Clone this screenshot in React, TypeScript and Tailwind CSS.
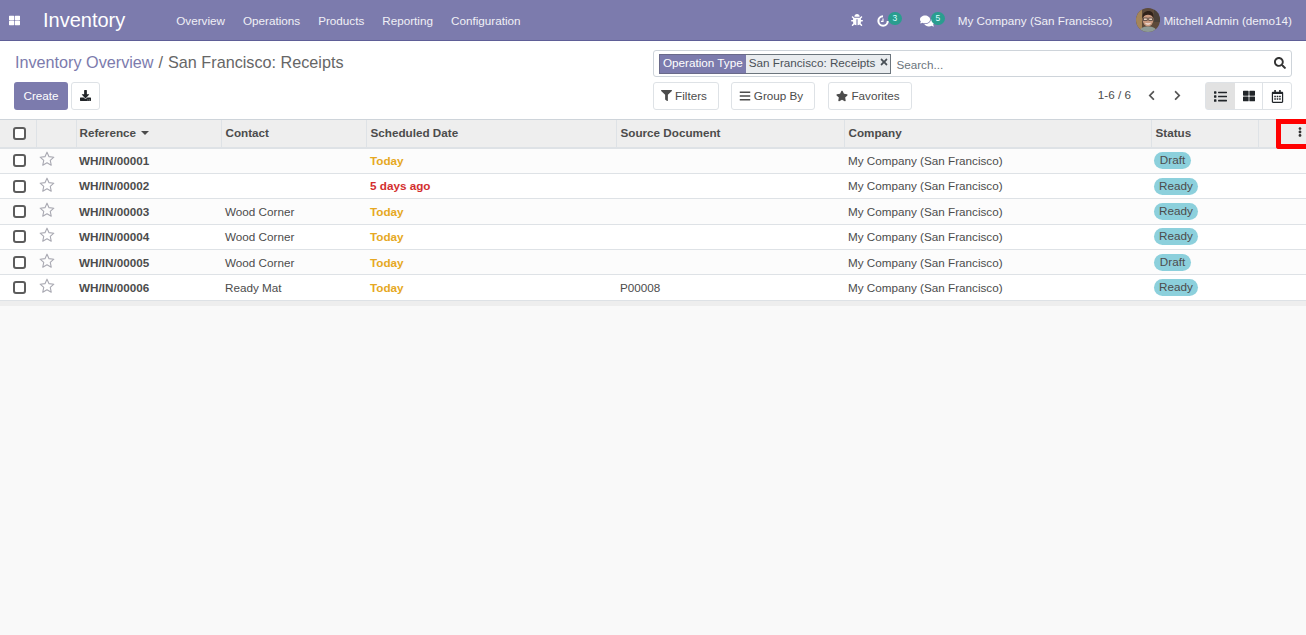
import {
  FaBars,
  FaBug,
  FaChevronLeft,
  FaChevronRight,
  FaComments,
  FaDownload,
  FaEllipsisV,
  FaFilter,
  FaList,
  FaRegCalendarAlt,
  FaSearch,
  FaStar,
  FaThLarge,
  FaTimes,
} from 'react-icons/fa'

const MENU = ['Overview', 'Operations', 'Products', 'Reporting', 'Configuration']

type Row = {
  ref: string
  contact: string
  date: string
  late?: boolean
  source: string
  status: 'Draft' | 'Ready'
}

const ROWS: Row[] = [
  { ref: 'WH/IN/00001', contact: '', date: 'Today', source: '', status: 'Draft' },
  { ref: 'WH/IN/00002', contact: '', date: '5 days ago', late: true, source: '', status: 'Ready' },
  { ref: 'WH/IN/00003', contact: 'Wood Corner', date: 'Today', source: '', status: 'Ready' },
  { ref: 'WH/IN/00004', contact: 'Wood Corner', date: 'Today', source: '', status: 'Ready' },
  { ref: 'WH/IN/00005', contact: 'Wood Corner', date: 'Today', source: '', status: 'Draft' },
  { ref: 'WH/IN/00006', contact: 'Ready Mat', date: 'Today', source: 'P00008', status: 'Ready' },
]

function Check() {
  return <span className="block w-[13px] h-[13px] rounded-[3px] border-2 border-[#5c5c5c] bg-white ml-[13px]" />
}

function Star() {
  return (
    <svg width="16" height="15" viewBox="0 0 24 23" className="block ml-[3px] -mt-[4px]">
      <path
        d="M12 1.8l3.1 6.9 7.4.8-5.5 5 1.5 7.3-6.5-3.7-6.5 3.7 1.5-7.3-5.5-5 7.4-.8z"
        fill="none"
        stroke="#a9a9b2"
        strokeWidth="1.7"
        strokeLinejoin="round"
      />
    </svg>
  )
}

function ClockIcon() {
  return (
    <svg width="12" height="12" viewBox="0 0 14 14" className="block mt-[1px]">
      <path d="M12.6 7A5.5 5.5 0 1 1 7 1.500" fill="none" stroke="#fff" strokeWidth="2.400" />
      <path d="M7 4.200v3.200H4.600" fill="none" stroke="#fff" strokeWidth="1.300" />
    </svg>
  )
}

function Avatar() {
  return (
    <svg width="24" height="24" viewBox="0 0 24 24" className="rounded-full shrink-0">
      <rect width="24" height="24" fill="#5d4a3a" />
      <rect x="0" y="0" width="6" height="24" fill="#a58559" />
      <rect x="18" y="0" width="6" height="14" fill="#4a4038" />
      <path d="M3 24c1-4 4-5.500 9-5.500s8 1.500 9 5.500z" fill="#8f9c96" />
      <ellipse cx="12" cy="12" rx="5.300" ry="6.500" fill="#c99a80" />
      <path d="M6.500 10c-.5-5 2.500-7 6-7s5.500 2.500 5 7c-1-2.500-3-3.200-5.500-3.200S8 7.500 6.500 10z" fill="#2f2119" />
      <rect x="7.600" y="10" width="3.600" height="2.400" fill="#e5cdb9" stroke="#3b3330" strokeWidth=".7" />
      <rect x="12.800" y="10" width="3.600" height="2.400" fill="#e5cdb9" stroke="#3b3330" strokeWidth=".7" />
      <path d="M9.500 15.300c1.500 1 3.500 1 5 0" fill="none" stroke="#fff" strokeWidth="1" />
    </svg>
  )
}

function Badge({ n }: { n: number }) {
  return (
    <span className="absolute -top-[2px] left-[11px] w-[14px] h-[13px] rounded-full bg-[#2a9d8f] text-[#dff] text-[8.5px] leading-[12px] text-center">
      {n}
    </span>
  )
}

function Navbar() {
  return (
    <header className="h-[41px] shrink-0 flex items-center bg-[#7c7bad] border-b border-[#5f5e97] text-white text-[11.7px]">
      <FaThLarge className="ml-[9px] text-[11px]" />
      <span className="ml-[23px] text-[20px] leading-none">Inventory</span>
      <nav className="flex ml-[51px] gap-[18px] text-[#f0f0f6] pt-[1px]">
        {MENU.map((m) => (
          <span key={m}>{m}</span>
        ))}
      </nav>
      <div className="ml-auto flex items-center text-[#f0f0f6]">
        <FaBug className="text-[12px] text-white mr-[14px]" />
        <span className="relative w-[24px] h-[13px] mr-[19px] block">
          <ClockIcon />
          <Badge n={3} />
        </span>
        <span className="relative w-[24px] h-[13px] mr-[14px] block">
          <FaComments className="text-[14px] text-white" />
          <Badge n={5} />
        </span>
        <span className="mr-[24px] pt-[1px]">My Company (San Francisco)</span>
        <Avatar />
        <span className="ml-[3px] mr-[14px] pt-[1px]">Mitchell Admin (demo14)</span>
      </div>
    </header>
  )
}

function ToolButton({ icon, label, className }: { icon: React.ReactNode; label: string; className: string }) {
  return (
    <button className={`h-[28px] pr-[4px] pb-[1px] flex items-center justify-center gap-[3px] bg-white border border-[#dee2e6] rounded-[3px] text-[11.7px] text-[#4c4c4c] ${className}`}>
      {icon}
      {label}
    </button>
  )
}

function ControlPanel() {
  return (
    <div className="h-[79px] shrink-0 bg-white border-b border-[#ced4da] flex justify-between pl-[14px] pr-[14px]">
      <div className="flex flex-col">
        <div className="mt-[12px] pl-[1px] text-[16.2px] leading-[19px] text-[#666]">
          <span className="text-[#7c7bad]">Inventory Overview</span>
          <span className="mx-[5px]">/</span>
          San Francisco: Receipts
        </div>
        <div className="mt-[10px] flex gap-[3px]">
          <button className="w-[54px] h-[28px] bg-[#7c7bad] rounded-[3px] text-white text-[11.7px]">Create</button>
          <button className="w-[29px] h-[28px] bg-white border border-[#dee2e6] rounded-[3px] flex items-center justify-center text-[#212529]">
            <FaDownload className="text-[11px] -mt-[1px]" />
          </button>
        </div>
      </div>
      <div className="w-[639px] flex flex-col">
        <div className="mt-[9px] h-[27px] border border-[#ced4da] rounded-[3px] flex items-center pl-[5px] pr-[5px] text-[11.7px]">
          <span className="h-[20px] flex items-center px-[3px] pb-[1px] bg-[#7c7bad] text-white border border-[#6a6a8a] border-r-0 leading-none">
            Operation Type
          </span>
          <span className="h-[20px] flex items-center pl-[3px] pr-[1px] pb-[1px] bg-[#e9ecef] text-[#495057] border border-[#6c757d] border-l-0 leading-none">
            San Francisco: Receipts
            <FaTimes className="ml-[4px] text-[10px] -mt-[3px]" />
          </span>
          <span className="ml-[5px] text-[#6c757d] mt-[2px]">Search...</span>
          <FaSearch className="ml-auto text-[12px] text-[#333] -mt-[2px]" />
        </div>
        <div className="mt-[5px] flex items-center">
          <ToolButton icon={<FaFilter className="text-[11px]" />} label="Filters" className="w-[66px]" />
          <ToolButton icon={<FaBars className="text-[12px]" />} label="Group By" className="w-[84px] ml-[12px]" />
          <ToolButton icon={<FaStar className="text-[12px]" />} label="Favorites" className="w-[84px] ml-[13px]" />
          <span className="ml-auto text-[11.7px] text-[#4c4c4c] -mt-[2px]">1-6 / 6</span>
          <FaChevronLeft className="ml-[15px] text-[11px] text-[#555] -mt-[2px]" />
          <FaChevronRight className="ml-[15px] text-[11px] text-[#555] -mt-[2px]" />
          <div className="ml-[22px] h-[28px] flex border border-[#dee2e6] rounded-[3px] text-[#212529]">
            <span className="w-[29px] flex items-center justify-center bg-[#e2e2e2]">
              <FaList className="text-[13px]" />
            </span>
            <span className="w-[28px] flex items-center justify-center border-r border-[#dee2e6]">
              <FaThLarge className="text-[12px]" />
            </span>
            <span className="w-[28px] flex items-center justify-center">
              <FaRegCalendarAlt className="text-[13px]" />
            </span>
          </div>
        </div>
      </div>
    </div>
  )
}

const TH = 'border-l border-[#dee2e6] pl-[4px] pb-[1px] text-left font-bold text-[#4c4c4c]'
const TD = 'pl-[4px] pt-[0.2px]'

function Table() {
  return (
    <div className="relative">
      <table className="w-full table-fixed border-collapse text-[11.7px]">
        <colgroup>
          <col className="w-[36px]" />
          <col className="w-[40px]" />
          <col className="w-[145px]" />
          <col className="w-[145px]" />
          <col className="w-[250px]" />
          <col className="w-[228px]" />
          <col className="w-[307px]" />
          <col className="w-[107px]" />
          <col className="w-[18px]" />
          <col />
        </colgroup>
        <thead>
          <tr className="h-[28px] bg-[#eeeeee] border-b-2 border-[#dee2e6]">
            <th className="text-left">
              <Check />
            </th>
            <th className={TH} />
            <th className="border-l border-[#dee2e6] pl-[3px] pb-[1px] text-left font-bold text-[#4c4c4c]">
              Reference
              <span className="inline-block ml-[5px] align-[2px] border-x-[4px] border-x-transparent border-t-[4px] border-t-[#4c4c4c]" />
            </th>
            <th className={TH}>Contact</th>
            <th className={TH}>Scheduled Date</th>
            <th className={TH}>Source Document</th>
            <th className={TH}>Company</th>
            <th className={TH}>Status</th>
            <th className={TH} />
            <th className={TH} />
          </tr>
        </thead>
        <tbody className="text-[#4c4c4c]">
          {ROWS.map((r, i) => (
            <tr key={r.ref} className={`h-[25.4px] border-b border-[#dee2e6] ${i % 2 === 0 ? 'bg-[#fcfcfc]' : 'bg-white'}`}>
              <td>
                <Check />
              </td>
              <td>
                <Star />
              </td>
              <td className="pl-[3px] pt-[0.2px] font-bold">{r.ref}</td>
              <td className={TD}>{r.contact}</td>
              <td className={`${TD} font-bold ${r.late ? 'text-[#d32f2f]' : 'text-[#e6a823]'}`}>{r.date}</td>
              <td className={TD}>{r.source}</td>
              <td className={TD}>My Company (San Francisco)</td>
              <td className="pl-[3px]">
                <span className={`block h-[17px] leading-[16px] rounded-full bg-[#8cd0dc] text-center ${r.status === 'Draft' ? 'w-[37px]' : 'w-[44px]'}`}>
                  {r.status}
                </span>
              </td>
              <td />
              <td />
            </tr>
          ))}
        </tbody>
      </table>
      <div className="h-[5px] bg-[#eeeeee]" />
      {/* red annotation around the optional columns toggle */}
      <div className="absolute right-0 -top-[1px] w-[30px] h-[30px] border-[5px] border-r-0 border-[#ff0000] rounded-bl-[3px] flex items-center justify-end pr-[1px]">
        <FaEllipsisV className="text-[10px] text-[#333] -mt-[4px]" />
      </div>
    </div>
  )
}

export default function App() {
  return (
    <div className="h-[635px] w-[1306px] overflow-hidden flex flex-col bg-[#f9f9f9] font-['Liberation_Sans',sans-serif]">
      <Navbar />
      <ControlPanel />
      <Table />
    </div>
  )
}
